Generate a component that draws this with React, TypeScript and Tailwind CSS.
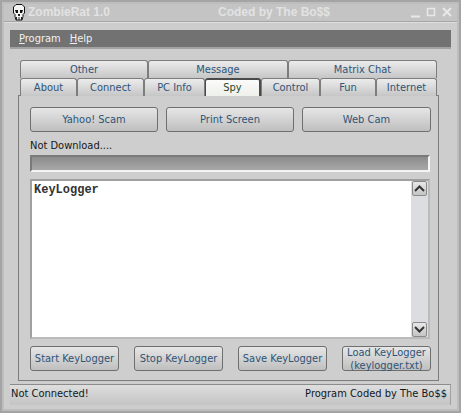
const TAB_TEXT = "text-[#2f5478]";
const BODY_FONT = "font-['DejaVu_Sans',sans-serif] [font-stretch:condensed] text-[11px]";

function Skull() {
  return (
    <svg width="12" height="17" viewBox="0 0 12 17" className="shrink-0">
      <path d="M3 .5h6l2.500 2.500v6l-1.500 1.500v2l-1 3.500H3l-1-3.500v-2L.5 9V3z" fill="#f4f4f4" stroke="#111" strokeWidth="1" />
      <path d="M2 6h3v3H3zM7 6h3l-1 3H7z" fill="#111" />
      <path d="M5 10h2v2H5zM3 13h1v3H3zM5.500 13h1v3h-1zM8 13h1v3H8z" fill="#222" />
    </svg>
  );
}

function Tab({ w, label, active }: { w: string; label: string; active?: boolean }) {
  return (
    <div
      className={`${w} h-full pt-[1px] shrink-0 flex items-center justify-center rounded-t-[3px] border-b-0 ${
        active
          ? "bg-gradient-to-b from-[#fbfbfb] to-[#eef0ea] text-[#1f4a2a] border-t-2 border-r-2 border-l border-[#4a4a4a]"
          : `border border-[#7d7d7d] bg-gradient-to-b from-[#ececec] to-[#c6c6c6] ${TAB_TEXT}`
      }`}
    >
      {label}
    </div>
  );
}

function Btn({ w, h, children }: { w: string; h: string; children: React.ReactNode }) {
  return (
    <div
      className={`${w} ${h} shrink-0 flex flex-col items-center justify-center whitespace-nowrap rounded-[3px] border border-[#6f6f6f] bg-gradient-to-b from-[#e6e6e6] to-[#bfbfbf] ${TAB_TEXT} leading-[13px]`}
    >
      {children}
    </div>
  );
}

function ScrollBtn({ up }: { up?: boolean }) {
  return (
    <div className="w-[15px] h-[15px] flex items-center justify-center rounded-[2px] border border-[#8a8a8a] bg-gradient-to-b from-[#e8e8e8] to-[#c4c4c4]">
      <svg width="11" height="7" viewBox="0 0 11 7">
        <path d={up ? "M1 6l4.500-4.500L10 6" : "M1 1l4.500 4.500L10 1"} fill="none" stroke="#333" strokeWidth="2" />
      </svg>
    </div>
  );
}

export default function App() {
  return (
    <div className="w-[461px] h-[413px] overflow-hidden border-2 border-[#a4a4a4]">
      <div className={`h-full bg-[#cdcdcd] border-2 border-[#bdbdbd] ${BODY_FONT}`}>
        {/* Title bar */}
        <div className="h-[18px] pl-[9px] pr-[5px] flex items-center bg-[#c4c4c4] border-b border-b-[#a6a6a6]">
          <Skull />
          <span className="ml-[3px] w-[190px] shrink-0 font-['Liberation_Sans',sans-serif] [font-stretch:normal] font-bold text-[12px] leading-[14px] pb-[2px] text-[#e2e2e2]">ZombieRat 1.0</span>
          <span className="font-['Liberation_Sans',sans-serif] [font-stretch:normal] font-bold text-[12px] leading-[14px] pb-[2px] text-[#e2e2e2]">Coded by The Bo$$</span>
          <svg width="41" height="12" viewBox="0 0 41 12" className="ml-auto">
            <path d="M0 9.500h9" stroke="#e8e8e8" strokeWidth="2" />
            <rect x="16.500" y="1.500" width="7" height="7" fill="none" stroke="#e8e8e8" strokeWidth="1.500" />
            <path d="M32 1l8 8M40 1l-8 8" stroke="#e8e8e8" strokeWidth="2" />
          </svg>
        </div>

        <div className="px-[6px] border-t border-t-[#dedede]">
          {/* Menu bar */}
          <div className="mt-[7px] h-[19px] flex items-center gap-[9px] pl-[9px] pt-[1px] bg-[#727272] border-b-2 border-[#a2a2a2] text-[#f0f0f0]">
            <span><u>P</u>rogram</span>
            <span><u>H</u>elp</span>
          </div>

          {/* Tabs */}
          <div className="mt-[11px] ml-[8px] w-[421px]">
            <div className="pl-[2px] h-[18px] flex">
              <Tab w="w-[128px]" label="Other" />
              <Tab w="w-[140px]" label="Message" />
              <Tab w="w-[149px]" label="Matrix Chat" />
            </div>
            <div className="pl-[2px] h-[18px] flex relative z-10 -mb-[1px]">
              <Tab w="w-[57px]" label="About" />
              <Tab w="w-[67px]" label="Connect" />
              <Tab w="w-[61px]" label="PC Info" />
              <Tab w="w-[56px]" label="Spy" active />
              <Tab w="w-[59px]" label="Control" />
              <Tab w="w-[56px]" label="Fun" />
              <Tab w="w-[61px]" label="Internet" />
            </div>

            {/* Tab page */}
            <div className="h-[286px] border border-[#7d7d7d] bg-[#cecece] px-[11px] pt-[11px]">
              <div className="flex gap-[8px]">
                <Btn w="w-[128px]" h="h-[25px]">Yahoo! Scam</Btn>
                <Btn w="w-[128px]" h="h-[25px]">Print Screen</Btn>
                <Btn w="w-[129px]" h="h-[25px]">Web Cam</Btn>
              </div>
              <div className="mt-[5px] h-[18px] leading-[17px] text-[#161616]">Not Download....</div>
              <div className="w-[400px] h-[17px] border-2 border-t-[#7a7a7a] border-l-[#7a7a7a] border-r-[#f4f4f4] border-b-[#f4f4f4] bg-gradient-to-b from-[#8c8c8c] to-[#a8a8a8]" />

              {/* Log box */}
              <div className="mt-[7px] w-[400px] h-[160px] flex border-2 border-t-[#a0a0a0] border-l-[#a0a0a0] border-r-[#bbbbbb] border-b-[#bbbbbb] bg-white">
                <div className="flex-1 pl-[2px] font-['Liberation_Mono',monospace] [font-stretch:normal] font-bold text-[12px] text-[#333]">KeyLogger</div>
                <div className="w-[17px] flex flex-col justify-between bg-[#dcdde0] pl-[1px]">
                  <ScrollBtn up />
                  <ScrollBtn />
                </div>
              </div>

              <div className="mt-[7px] flex gap-[15px]">
                <Btn w="w-[89px]" h="h-[25px]">Start KeyLogger</Btn>
                <Btn w="w-[89px]" h="h-[25px]">Stop KeyLogger</Btn>
                <Btn w="w-[89px]" h="h-[25px]">Save KeyLogger</Btn>
                <Btn w="w-[89px]" h="h-[25px]">
                  <span>Load KeyLogger</span>
                  <span>(keylogger.txt)</span>
                </Btn>
              </div>
            </div>
          </div>

          {/* Status bar */}
          <div className="mt-[3px] h-[21px] flex items-center justify-between pl-[1px] pr-[3px] pb-[1px] border-t border-[#8c8c8c] border-r border-r-[#a0a0a0] bg-gradient-to-b from-[#dedede] to-[#c4c4c4] text-[#101820]">
            <span>Not Connected!</span>
            <span>Program Coded by The Bo$$</span>
          </div>
        </div>
      </div>
    </div>
  );
}
